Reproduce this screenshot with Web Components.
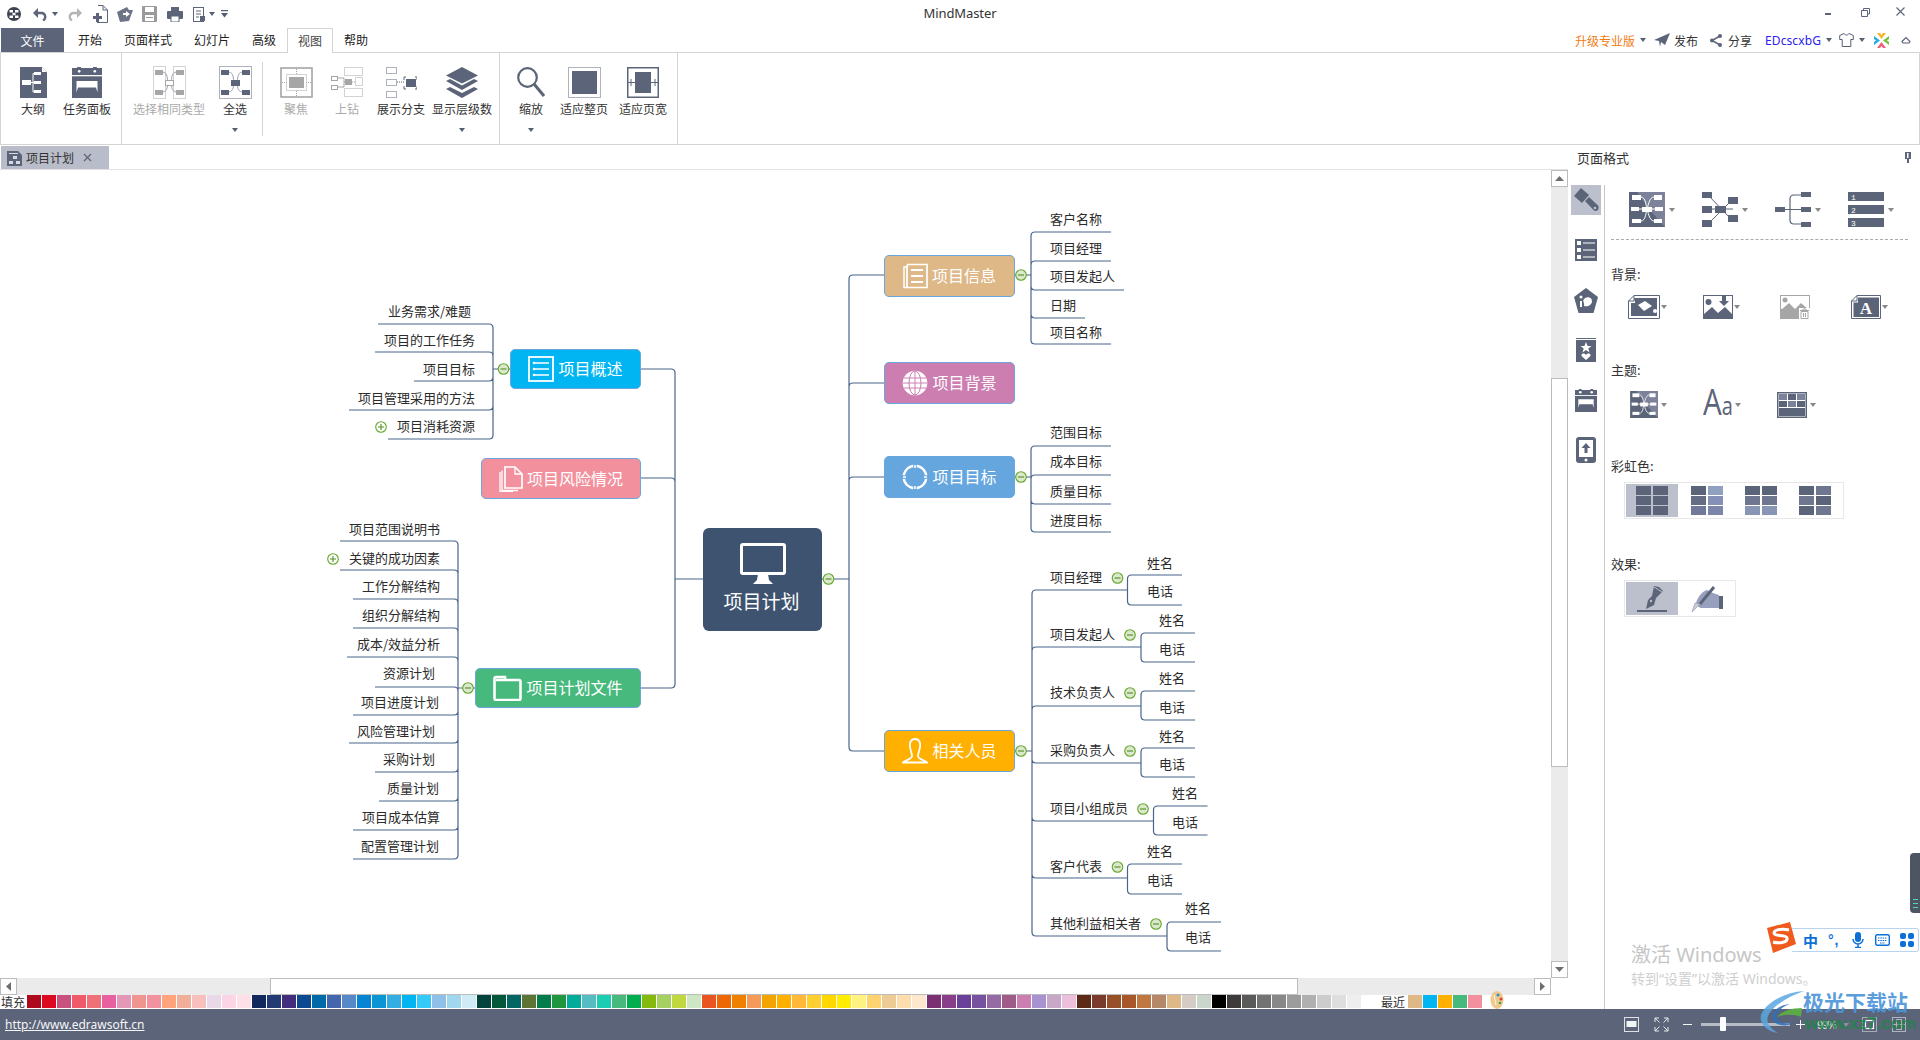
<!DOCTYPE html>
<html lang="zh">
<head>
<meta charset="utf-8">
<title>MindMaster</title>
<style>
  html, body { margin: 0; height: 100%; overflow: hidden; background: #fff; }
  body { font-family: "Noto Sans CJK SC", "Noto Sans", sans-serif; font-size: 12px; color: #333; }
</style>
</head>
<body>
<mm-app></mm-app>
<script>
const C = '#5b6478', G = '#a6a6a6';
const svg = (w, h, body, extra = '') => `<svg xmlns="http://www.w3.org/2000/svg" width="${w}" height="${h}" viewBox="0 0 ${w} ${h}" ${extra}>${body}</svg>`;

// map shape used by 选择相同类型 / 全选
const xmap = (col, frame) => svg(33, 33, `
  ${frame ? `<rect x=".5" y=".5" width="32" height="32" fill="none" stroke="${col}" stroke-dasharray="1 1"/>`
          : `<rect x=".5" y=".5" width="12" height="32" fill="none" stroke="${col}" stroke-dasharray="1 1"/><rect x="20.5" y=".5" width="12" height="32" fill="none" stroke="${col}" stroke-dasharray="1 1"/>`}
  <path d="M10 6C15 7 14 13 15 16M23 6C18 7 19 13 18 16M10 26C15 25 14 20 15 18M23 26C18 25 19 20 18 18" fill="none" stroke="#9a9fae"/>
  <rect x="2" y="4" width="8" height="5" fill="${col}"/><rect x="23" y="4" width="8" height="5" fill="${col}"/>
  <rect x="2" y="24" width="8" height="5" fill="${col}"/><rect x="23" y="24" width="8" height="5" fill="${col}"/>
  ${frame ? `<rect x="12" y="14" width="9" height="6" fill="${col}"/>` : `<rect x="12.5" y="14.5" width="8" height="5" fill="#fff" stroke="${col}"/>`}`);

const calendar = (w, h) => svg(w, h, `
  <path d="M0 1H${w * .17}V0H${w * .3}V1H${w * .7}V0H${w * .83}V1H${w}V${h * .26}H0Z" fill="${C}"/>
  <circle cx="${w * .24}" cy="${h * .14}" r="1.3" fill="#fff"/><circle cx="${w * .76}" cy="${h * .14}" r="1.3" fill="#fff"/>
  <path d="M0 ${h * .3}H${w}V${h}H0Z" fill="${C}"/>
  <path d="M${w * .15} ${h * .45}H${w * .85}V${h * .82}L${w * .8} ${h * .66}H${w * .2}L${w * .15} ${h * .82}Z" fill="#fff"/>`);

const mapStyle = (w, h) => svg(36, 35, `
  <rect width="36" height="35" fill="${C}"/><path d="M8 0H36V35L20 17Z" fill="#7b8299"/>
  <path d="M12 5C17 5 17 15 18 17M25 5C20 5 19 15 18 17M12 29C17 29 17 19 18 17M25 29C20 29 19 19 18 17M10 17H26" fill="none" stroke="#fff"/>
  <g fill="#fff"><rect x="3" y="3" width="9" height="5"/><rect x="25" y="3" width="8" height="5"/><rect x="2" y="15" width="8" height="4"/><rect x="26" y="15" width="8" height="4"/><rect x="3" y="27" width="9" height="4"/><rect x="25" y="27" width="8" height="4"/><rect x="13" y="15" width="10" height="5"/></g>`, `style="width:${w}px;height:${h}px"`);

const rainbow = (cols) => svg(32, 29, cols.map((c, i) => `<rect x="${i % 2 ? 17 : 0}" y="${Math.floor(i / 2) * 10}" width="15" height="9" fill="${c}"/>`).join(''));

const ICONS = {
  // quick access bar
  logo: svg(14, 14, `<circle cx="7" cy="7" r="7" fill="#3f4350"/><g fill="#fff"><rect x="2.5" y="3" width="3.5" height="2.5"/><rect x="8" y="3" width="3.5" height="2.5"/><rect x="2.5" y="8.5" width="3.5" height="2.5"/><rect x="8" y="8.5" width="3.5" height="2.5"/><rect x="5.5" y="5.8" width="3" height="2.4"/></g>`),
  undo: svg(15, 14, `<path d="M3 6H9A4 4 0 0 1 10 13.5" fill="none" stroke="${C}" stroke-width="2.4"/><path d="M5 1V11L0 6Z" fill="${C}"/>`),
  redo: svg(15, 14, `<path d="M12 6H6A4 4 0 0 0 5 13.5" fill="none" stroke="#b4b4b4" stroke-width="2.4"/><path d="M10 1V11L15 6Z" fill="#b4b4b4"/>`),
  newdoc: svg(16, 18, `<path d="M6 .5H11L15.5 5V17.5H5" fill="none" stroke="${C}"/><path d="M11 .5V5H15.5" fill="none" stroke="${C}"/><path d="M4 8V11H1V14H4V17H7V14H10V11H7V8Z" fill="${C}"/>`),
  open: svg(16, 15, `<path d="M0 5L10 0L12 3L16 3L12 14L3 15Z" fill="#6d7485"/><path d="M9 4L13 7L9 10V8H6V6H9Z" fill="#fff"/>`),
  save: svg(15, 16, `<rect width="15" height="16" rx="1" fill="#9a9a9a"/><rect x="3" y="1" width="9" height="5" fill="#fff"/><rect x="3" y="9" width="9" height="6" fill="#fff"/><rect x="4" y="11" width="7" height="1" fill="#9a9a9a"/>`),
  print: svg(16, 15, `<rect x="4" y="0" width="8" height="4" fill="${C}"/><rect y="4" width="16" height="8" rx="1" fill="${C}"/><rect x="4" y="9" width="8" height="6" fill="#fff" stroke="${C}"/>`),
  exportdoc: svg(12, 15, `<rect x=".5" y=".5" width="10" height="14" fill="#fff" stroke="${C}"/><path d="M3 4H8M3 7H8M3 10H6" stroke="${C}"/><path d="M7 9H12V14H7Z" fill="${C}"/>`),
  custom: svg(7, 8, `<rect y="0" width="7" height="1.200" fill="#555f74"/><path d="M0 3H7L3.500 7.500Z" fill="#555f74"/>`),
  // ribbon
  outline: svg(27, 31, `<path d="M0 0H22L27 5V31H0Z" fill="${C}"/><path d="M22 0L27 5H22Z" fill="#fff"/>
    <path d="M9 15.5H13M13 6.5V25M13 6.5H15M13 15.5H15M13 25H15" stroke="#fff" fill="none"/>
    <g fill="#fff"><rect x="2" y="13" width="9" height="5"/><rect x="14" y="5" width="7" height="3"/><rect x="14" y="14" width="7" height="3"/><rect x="14" y="23" width="7" height="3"/></g>`),
  taskpanel: calendar(30, 31),
  selsame: xmap(G, false),
  selall: xmap(C, true),
  focus: svg(33, 31, `<rect x="1" y="1" width="31" height="29" fill="none" stroke="${G}" stroke-width="1.6"/><path d="M16.5 2V29M2 15.5H31" stroke="${G}" stroke-dasharray="1 1"/><rect x="6.5" y="7.5" width="20" height="16" fill="#fff" stroke="${G}" stroke-dasharray="1 1"/><rect x="9" y="10" width="15" height="11" fill="${G}"/>`),
  drill: svg(32, 30, `<rect x=".5" y="9.5" width="6" height="4" fill="#fff" stroke="${G}"/><rect x=".5" y="18.5" width="6" height="4" fill="#fff" stroke="${G}"/><path d="M7 11H13M7 20H13M13 11V20M13 15H14" fill="none" stroke="${G}"/><rect x="14" y="12" width="7" height="6" fill="${G}"/><g fill="none" stroke="${G}" stroke-dasharray="1 1"><rect x="13.5" y=".5" width="18" height="8"/><rect x="24.5" y="10.5" width="7" height="8"/><rect x="13.5" y="21.5" width="18" height="8"/><path d="M21 15H24"/></g>`),
  branch: svg(31, 31, `<g fill="none" stroke="${C}" stroke-dasharray="1 1"><rect x=".5" y=".5" width="10" height="6"/><rect x=".5" y="12.5" width="10" height="6"/><rect x=".5" y="24.5" width="10" height="6"/><path d="M11 15H18"/></g><rect x="20" y="12" width="10" height="8" fill="${C}"/><path d="M18 13V10H20M29 10H31V13M18 19V22H20M29 22H31V19" fill="none" stroke="${C}"/>`),
  layers: svg(32, 31, `<path d="M16 0L32 8.5L16 16.5L0 8.5Z" fill="${C}"/><path d="M0 14L4 12L16 18.5L28 12L32 14L16 23Z" fill="${C}"/><path d="M0 22L4 20L16 26L28 20L32 22L16 31Z" fill="${C}"/>`),
  zoom: svg(28, 30, `<circle cx="10.5" cy="10.5" r="9.3" fill="none" stroke="${C}" stroke-width="2.2"/><path d="M17 17L27 29" stroke="${C}" stroke-width="3"/>`),
  fitpage: svg(33, 31, `<rect x=".5" y=".5" width="32" height="30" fill="none" stroke="${C}" stroke-dasharray="1 1"/><rect x="4" y="4" width="25" height="23" fill="${C}"/>`),
  fitwidth: svg(32, 31, `<rect x=".75" y=".75" width="30.5" height="29.5" fill="none" stroke="${C}" stroke-width="1.5"/><rect x="8" y="5" width="16" height="21" fill="${C}"/><path d="M1 15.5H31M4 12V19M28 12V19" stroke="${C}"/>`),
  // top right
  plane: svg(16, 14, `<path d="M0 7L16 0L11 12L7 9L6 14L5 8Z" fill="${C}"/>`),
  share: svg(12, 13, `<path d="M10 2L2 6.5L10 11" fill="none" stroke="${C}" stroke-width="1.5"/><circle cx="10" cy="2" r="2" fill="${C}"/><circle cx="2" cy="6.5" r="2" fill="${C}"/><circle cx="10" cy="11" r="2" fill="${C}"/>`),
  shirt: svg(15, 14, `<path d="M5 .5L0.7 2.5V6.5H3.2V13.5H11.8V6.5H14.3V2.5L10 .5C9 2.5 6 2.5 5 .5Z" fill="#fff" stroke="#555f74"/>`),
  brand: svg(15, 15, `<path d="M3 0H6L7.5 2L9 0H12L7.5 6Z" fill="#f4b62c"/><path d="M15 3V6L13 7.5L15 9V12L9 7.5Z" fill="#7ac143"/><path d="M3 15H6L7.5 13L9 15H12L7.5 9Z" fill="#ef5d7c"/><path d="M0 3V6L2 7.5L0 9V12L6 7.5Z" fill="#29abe2"/>`),
  upchev: svg(10, 8, `<path d="M1 5.5L5 1.5L9 5.5L8 7H2Z" fill="none" stroke="#555f74" stroke-width="1.1"/>`),
  pin: svg(8, 11, `<path d="M1 0H7V7H5V11H3V7H1Z" fill="${C}"/><rect x="3" y="1" width="1.5" height="5" fill="#fff"/>`),
  tabdoc: svg(15, 16, `<path d="M0 1H11L15 5V16H0Z" fill="${C}"/><g fill="#d6d9e0"><rect x="2" y="3" width="9" height="1"/><rect x="6" y="6" width="4" height="3"/><rect x="2" y="11" width="4" height="3"/><rect x="9" y="11" width="4" height="3"/></g>`),
  // panel side tabs
  sBrush: svg(26, 26, `<path d="M8 1L1 9L9 16L16 8Z" fill="${C}"/><path d="M12 14L16 10L25 18.5C27 21 24 26 20.5 23Z" fill="${C}"/><circle cx="22" cy="21" r="1.3" fill="#bcc0cc"/>`),
  sList: svg(22, 22, `<rect width="22" height="22" fill="${C}"/><g fill="#fff"><rect x="2" y="2" width="4" height="4"/><rect x="2" y="9" width="4" height="4"/><rect x="2" y="16" width="4" height="4"/><rect x="8" y="3.500" width="12" height="1"/><rect x="8" y="10.500" width="12" height="1"/><rect x="8" y="17.500" width="12" height="1"/></g>`),
  sPenta: svg(24, 25, `<path d="M12 0L24 9L19.500 25H4.500L0 9Z" fill="${C}"/><path d="M10 11C13 8 18 9 18 13C18 17 14 19 10 18C11 15 8 13 10 11Z" fill="#fff"/><circle cx="7" cy="9" r="1.500" fill="#fff"/><path d="M6 13H8V19H6Z" fill="#fff"/>`),
  sMark: svg(20, 24, `<rect width="20" height="1" fill="${C}"/><rect y="2" width="20" height="22" fill="${C}"/><path d="M10 4L11.600 8H15.500L12.300 10.500L13.500 14.500L10 12L6.500 14.500L7.700 10.500L4.500 8H8.400Z" fill="#fff"/><path d="M10 22L5.500 18C5 15 8.500 15 10 17C11.500 15 15 15 14.500 18Z" fill="#fff"/>`),
  sCal: calendar(22, 23),
  sPhone: svg(20, 26, `<rect width="20" height="26" rx="3" fill="${C}"/><rect x="3" y="3" width="14" height="17" fill="#fff"/><circle cx="10" cy="23" r="1.500" fill="#fff"/><path d="M10 6L14.500 11H11.500V16H8.500V11H5.500Z" fill="${C}"/>`),
  // panel row 1
  style1: mapStyle(36, 35),
  style2: svg(36, 35, `<path d="M6 3L30 28M6 32L30 8M5 17H31" stroke="${C}" fill="none"/><g fill="${C}"><rect width="10" height="6"/><rect y="14" width="10" height="7"/><rect y="28" width="10" height="7"/><rect x="13" y="14" width="11" height="7"/><rect x="26" y="5" width="10" height="7"/><rect x="26" y="23" width="10" height="7"/></g>`),
  style3: svg(36, 35, `<path d="M10 17.500H26M26 3H19Q15 3 15 7V28Q15 32 19 32H26" stroke="${C}" stroke-width="1.200" fill="none"/><g fill="${C}"><rect y="15" width="10" height="5"/><rect x="26" width="10" height="5"/><rect x="26" y="15" width="10" height="5"/><rect x="26" y="30" width="10" height="5"/></g>`),
  style4: svg(36, 35, `<g fill="${C}"><rect width="36" height="9"/><rect y="13" width="36" height="9"/><rect y="26" width="36" height="9"/></g><g fill="#fff" font-family="Liberation Mono, monospace" font-size="8"><text x="3" y="7.500">1</text><text x="3" y="20.500">2</text><text x="3" y="33.500">3</text></g>`),
  // 背景
  bgFill: svg(32, 24, `<path d="M6 .5H31.500V23.500H.5V6Z" fill="#fff" stroke="${C}"/><path d="M6 .5V6H.5" fill="none" stroke="${C}"/><rect x="3" y="8" width="26" height="13" fill="${C}"/><path d="M6 3H29V21H10Z" fill="${C}"/><path d="M10 10L17 6L24 11L16 16Z" fill="#fff"/><circle cx="27" cy="16" r="2" fill="#fff"/>`),
  bgImage: svg(30, 24, `<rect x=".5" y=".5" width="29" height="23" fill="#fff" stroke="${C}"/><path d="M0 24V20L9 12L15 18L22 12L30 20V24Z" fill="${C}"/><circle cx="5.500" cy="7" r="3" fill="${C}"/><path d="M19 0H23V6H26L21 11L16 6H19Z" fill="${C}"/>`),
  bgDel: svg(30, 24, `<rect width="30" height="24" fill="${G}"/><rect x="1" y="1" width="28" height="13" fill="#fff"/><path d="M1 15L9 8L15 14L21 8L29 15V16H1Z" fill="${G}"/><circle cx="5" cy="5" r="2.500" fill="${G}"/><rect x="19" y="13" width="11" height="11" fill="#fff"/><path d="M20 15.500H29M23 15.500V14H26V15.500M21 16.500H28V23.500H21ZM23.500 18V22M25.500 18V22" fill="none" stroke="${G}"/>`),
  bgText: svg(30, 24, `<path d="M6 .5H29.500V23.500H.5V6Z" fill="#fff" stroke="${C}"/><path d="M6 .5V6H.5" fill="none" stroke="${C}"/><path d="M7 2.500H28V22H2.500V7.500H7Z" fill="${C}"/><text x="15" y="19" text-anchor="middle" fill="#fff" font-family="Liberation Serif, serif" font-weight="700" font-size="17">A</text>`),
  // 主题
  themeMap: mapStyle(28, 27),
  themeTable: svg(30, 26, `<rect x=".75" y=".75" width="28.500" height="24.500" fill="#fff" stroke="${C}" stroke-width="1.500"/><g fill="#7b8299"><rect x="2" y="2" width="8" height="6"/><rect x="20" y="2" width="8" height="6"/><rect x="11" y="9" width="8" height="6"/></g><g fill="${C}"><rect x="11" y="2" width="8" height="6"/><rect x="2" y="9" width="8" height="6"/><rect x="20" y="9" width="8" height="6"/><rect x="2" y="16" width="26" height="8"/></g>`),
  // 彩虹色
  rb1: rainbow([C, C, C, C, C, C]),
  rb2: rainbow([C, '#90a0c0', '#656d85', '#8490b5', '#70799a', '#7b86aa']),
  rb3: rainbow([C, C, '#6e7690', '#6e7690', '#8995b5', '#8995b5']),
  rb4: rainbow([C, '#6e7690', '#6e7690', C, C, '#6e7690']),
  // 效果
  fxPen: svg(32, 28, `<rect x="1" y="25" width="30" height="2" fill="${C}"/><path d="M18 1L23 2L27 6L23 10L20 13L18 20L10 24L12 15L16 11Z" fill="${C}"/><path d="M18 2L26 7" stroke="#bcc0cc"/><circle cx="15" cy="16" r="1.200" fill="#bcc0cc"/>`),
  fxHand: svg(32, 28, `<path d="M5 18C7 11 12 6 16 5L22 8L28 10V23H10C8 23 6 20 5 18Z" fill="#97a0bc"/><rect x="28" y="11" width="4" height="13" fill="${C}"/><path d="M23 2L9 19" stroke="${C}" stroke-width="3"/><path d="M9 19L1 27L4 18Z" fill="#c8ccd6" stroke="#8e94a6" stroke-width=".6"/>`),
  // status bar
  stFit: svg(15, 15, `<rect x=".5" y=".5" width="14" height="14" fill="none" stroke="#dfe1e6"/><rect x="2.500" y="4" width="10" height="6" fill="#f2f3f5"/>`),
  stFull: svg(15, 15, `<path d="M1 5V1H5M10 1H14V5M1 10V14H5M10 14H14V10M1 1L5.500 5.500M14 1L9.500 5.500M1 14L5.500 9.500M14 14L9.500 9.500" fill="none" stroke="#e6e8ec"/>`),
  stPage: svg(15, 15, `<rect x=".5" y=".5" width="14" height="14" fill="none" stroke="#f0f1f3" stroke-dasharray="1 1"/><rect x="3.500" y="3.500" width="8" height="8" fill="none" stroke="#fff" stroke-width="1.200"/>`),
  stWidth: svg(14, 15, `<rect x=".5" y=".5" width="13" height="14" fill="none" stroke="#aeb3bf"/><rect x="4.500" y="2.500" width="5" height="10" fill="none" stroke="#aeb3bf"/><path d="M0 7.500H14" stroke="#aeb3bf"/>`),
  palette: svg(14, 18, `<ellipse cx="7" cy="9" rx="6.500" ry="9" fill="#eec98c"/><circle cx="8" cy="4" r="1.500" fill="#2f8ac6"/><circle cx="11" cy="8" r="1.500" fill="#d8413f"/><circle cx="10" cy="12" r="1.300" fill="#3f9f54"/><path d="M4 4L6 14" stroke="#fff8e6"/>`)
};

class MmIcon extends HTMLElement {
  connectedCallback() {
    if (this.shadowRoot) return;
    this.attachShadow({ mode: 'open' }).innerHTML = `<style>:host{display:inline-flex;flex:none;line-height:0}</style>${ICONS[this.getAttribute('name')] || ''}`;
  }
}

// small dropdown triangle
class MmCaret extends HTMLElement {
  constructor() {
    super();
    this.attachShadow({ mode: 'open' }).innerHTML = `<style>
      :host{display:inline-block;flex:none;width:0;height:0;border-left:3.5px solid transparent;border-right:3.5px solid transparent;border-top:4px solid var(--caret,#555f74)}
    </style>`;
  }
}

class MmTitlebar extends HTMLElement {
  constructor() {
    super();
    const items = [['logo', 7], ['undo', 12], [null, 4], ['redo', 9], ['newdoc', 10], ['open', 9], ['save', 9], ['print', 10], ['exportdoc', 10], [null, 4]];
    const quick = items.map(([n, m]) => n ? `<mm-icon name="${n}" style="margin-left:${m}px"></mm-icon>` : `<mm-caret style="margin-left:${m}px"></mm-caret>`).join('');
    this.attachShadow({ mode: 'open' }).innerHTML = `<style>
      :host{display:grid;grid-template-columns:1fr auto 1fr;height:28px;align-items:center;background:#fff}
      .quick,.win{display:flex;align-items:center}
      .title{font:13px "Noto Sans",sans-serif;color:#333;letter-spacing:-.1px;padding-bottom:2px}
      .win{justify-content:flex-end}
      .min{width:6px;height:2px;background:#5b6478;margin-right:30px}
      .res{margin-right:26px;margin-top:-4px}
      .close{margin-right:15px;margin-top:-5px}
    </style>
    <div class="quick">${quick}<mm-icon name="custom" style="margin-left:6px"></mm-icon></div>
    <div class="title">MindMaster</div>
    <div class="win">
      <div class="min"></div>
      <svg class="res" width="9" height="9" viewBox="0 0 9 9"><path d="M2.500 2V.5H8.500V6H7M.5 2.500H6.500V8.500H.5Z" fill="none" stroke="#5b6478"/></svg>
      <svg class="close" width="9" height="9" viewBox="0 0 9 9"><path d="M.5 .5L8.500 8.500M8.500 .5L.5 8.500" stroke="#5b6478" stroke-width="1.100"/></svg>
    </div>`;
  }
}

class MmTabs extends HTMLElement {
  constructor() {
    super();
    const tabs = ['开始', '页面样式', '幻灯片', '高级', '视图', '帮助'];
    this.attachShadow({ mode: 'open' }).innerHTML = `<style>
      :host{display:flex;height:24px;align-items:stretch;position:relative;z-index:1}
      .file{margin-left:1px;width:63px;background:#5b6478;color:#fff;display:flex;align-items:center;justify-content:center}
      .tabs{display:flex;margin-left:3px}
      .tab{padding:0 11px;line-height:24px;color:#222;box-sizing:border-box}
      .tab.on{height:25px;border:1px solid #d4d4d4;border-bottom:0;padding:0 10px;line-height:23px;background:#fff;color:#444}
      .right{margin-left:auto;display:flex;align-items:center;height:24px}
      .up{color:#f47a10}
      .user{color:#2a22f0;font:12px "Noto Sans",sans-serif;letter-spacing:.1px}
      span{white-space:nowrap}
    </style>
    <div class="file">文件</div>
    <div class="tabs">${tabs.map(t => `<div class="tab ${t === '视图' ? 'on' : ''}">${t}</div>`).join('')}</div>
    <div class="right">
      <span class="up">升级专业版</span><mm-caret style="margin-left:5px"></mm-caret>
      <mm-icon name="plane" style="margin-left:8px"></mm-icon><span style="margin-left:4px">发布</span>
      <mm-icon name="share" style="margin-left:12px"></mm-icon><span style="margin-left:6px">分享</span>
      <span class="user" style="margin-left:13px">EDcscxbG</span><mm-caret style="margin-left:5px"></mm-caret>
      <mm-icon name="shirt" style="margin-left:7px"></mm-icon><mm-caret style="margin-left:5px"></mm-caret>
      <mm-icon name="brand" style="margin-left:9px"></mm-icon>
      <mm-icon name="upchev" style="margin-left:12px;margin-right:9px"></mm-icon>
    </div>`;
  }
}

class RbButton extends HTMLElement {
  constructor() {
    super();
    const icon = this.getAttribute('icon');
    const caret = this.hasAttribute('caret') ? '<mm-caret class="c"></mm-caret>' : '';
    this.attachShadow({ mode: 'open' }).innerHTML = `<style>
      :host{display:flex;flex:none;flex-direction:column;align-items:center;box-sizing:border-box;padding-top:13px;color:#333;height:91px}
      :host([off]){color:#aaa}
      .i{height:32px;display:flex;align-items:center;justify-content:center}
      .t{margin-top:2px;line-height:18px;white-space:nowrap}
      .c{margin-top:10px}
    </style>
    <div class="i"><mm-icon name="${icon}"></mm-icon></div><div class="t"><slot></slot></div>${caret}`;
  }
}

class RbGroup extends HTMLElement {
  constructor() {
    super();
    this.attachShadow({ mode: 'open' }).innerHTML = `<style>
      :host{display:flex;flex:none;box-sizing:border-box;border-right:1px solid #d4d4d4;height:91px}
      :host([short]){border-right:0}
      :host([short])::after{content:"";align-self:center;width:1px;height:74px;background:#d4d4d4;margin-left:auto}
    </style><slot></slot>`;
  }
}

class MmRibbon extends HTMLElement {
  constructor() {
    super();
    this.attachShadow({ mode: 'open' }).innerHTML = `<style>
      :host{display:flex;height:93px;box-sizing:border-box;border:1px solid #d4d4d4;background:#fff}
    </style><slot></slot>`;
  }
}

class MmDocTabs extends HTMLElement {
  constructor() {
    super();
    this.attachShadow({ mode: 'open' }).innerHTML = `<style>
      :host{display:flex;height:25px;box-sizing:border-box;border-bottom:1px solid #e3e3e3;padding-top:1px;padding-left:1px}
      .tab{width:108px;background:#b9bdc9;display:flex;align-items:center;box-sizing:border-box;padding-left:6px;color:#333}
      .t{margin-left:4px}
      .x{margin-left:9px}
    </style>
    <div class="tab"><mm-icon name="tabdoc"></mm-icon><span class="t">项目计划</span>
      <svg class="x" width="9" height="9" viewBox="0 0 9 9"><path d="M1 1L8 8M8 1L1 8" stroke="#5b6478" stroke-width="1.200"/></svg></div>`;
  }
}

class MapTopic extends HTMLElement {
  constructor() {
    super();
    this.attachShadow({ mode: 'open' }).innerHTML = `<style>
      :host{position:absolute;display:flex;align-items:center;justify-content:center;gap:4px;box-sizing:border-box;border:1px solid #6aa5dc;border-radius:5px;color:#fff;font-size:16px;background:var(--bg)}
      span{white-space:nowrap;line-height:20px;padding-bottom:2px}
    </style><slot name="icon"></slot><span><slot></slot></span>`;
  }
}

class MapRoot extends HTMLElement {
  constructor() {
    super();
    this.attachShadow({ mode: 'open' }).innerHTML = `<style>
      :host{position:absolute;display:flex;flex-direction:column;align-items:center;box-sizing:border-box;border-radius:6px;background:#3e5370;color:#fff;font-size:19px;padding-top:15px}
      span{line-height:28px;margin-top:3px;margin-right:2px;white-space:nowrap}
    </style><slot name="icon"></slot><span><slot></slot></span>`;
  }
}

class MapLeaf extends HTMLElement {
  constructor() {
    super();
    this.attachShadow({ mode: 'open' }).innerHTML = `<style>
      :host{position:absolute;font-size:13px;line-height:16px;height:18px;color:#2b2b2b;white-space:nowrap}
    </style><slot></slot>`;
  }
}

const WHITE = 'fill="none" stroke="#fff"';
const TOPIC_ICONS = {
  info: svg(25, 26, `<path d="M4 1.500H24V24.500H4" ${WHITE} stroke-width="1.700"/><path d="M4 4H1V24.500H4" ${WHITE} stroke-width="1.500"/><path d="M4 2V24M8 7H20M8 13H20M8 19H20" ${WHITE} stroke-width="1.800"/>`),
  globe: svg(26, 26, `<circle cx="13" cy="13" r="12.300" fill="#fff"/><g stroke="#cc7eb1" fill="none"><ellipse cx="13" cy="13" rx="6" ry="12"/><path d="M13 1V25M2 8H24M1 13H25M2 18H24"/></g>`),
  target: svg(26, 26, `<circle cx="13" cy="13" r="11.300" ${WHITE} stroke-width="2.400"/><path d="M13 0V5M13 21V26M0 13H5M21 13H26" stroke="#66a6df" stroke-width="3.500"/><path d="M13 1V4M13 22V25M1 13H4M22 13H25" stroke="#fff" stroke-width="1.600"/>`),
  person: svg(26, 26, `<path d="M13 1C8.500 1 7.500 5 8 9C8.500 13 10 15 10 18C10 21 4 22 1 24.500H25C22 22 16 21 16 18C16 15 17.500 13 18 9C18.500 5 17.500 1 13 1Z" ${WHITE} stroke-width="1.800"/>`),
  list: svg(26, 26, `<rect x="1" y="1" width="24" height="24" ${WHITE} stroke-width="1.800"/><path d="M5 7H21M5 13H21M5 19H21" ${WHITE} stroke-width="1.600"/><circle cx="6" cy="7" r="1.300" fill="#fff"/><circle cx="6" cy="13" r="1.300" fill="#fff"/><circle cx="6" cy="19" r="1.300" fill="#fff"/>`),
  pages: svg(24, 26, `<path d="M6 1H16L23 8V22H6Z" ${WHITE} stroke-width="1.700"/><path d="M16 1V8H23" ${WHITE} stroke-width="1.300"/><path d="M3 4.500V24.500H19M1 6V25.500H14" ${WHITE} stroke-width="1.300"/>`),
  folder: svg(29, 26, `<path d="M3 5H12V2H3Q1.500 2 1.500 4V23Q1.500 25 3 25H26Q27.500 25 27.500 23V7Q27.500 5 26 5H12" ${WHITE} stroke-width="2.600"/>`),
  monitor: svg(46, 41, `<rect x="1.500" y="1.500" width="43" height="29" rx="1.500" ${WHITE} stroke-width="3"/><path d="M18 31H28L29 37L33 41H13L17 37Z" fill="#fff"/>`)
};

// collapse / expand button on a branch
const toggleBtn = (x, y, plus) => `
  <circle cx="${x}" cy="${y}" r="5.300" fill="${plus ? '#fff' : '#dbe8cd'}" stroke="#63a62a" stroke-width="1.100"/>
  <path d="M${x - 3} ${y}H${x + 3}${plus ? `M${x} ${y - 3}V${y + 3}` : ''}" stroke="#4f8f1d" stroke-width="1.100"/>`;

class MindMap extends HTMLElement {
  constructor() {
    super();
    const root = this.attachShadow({ mode: 'open' });
    const TOP = 170;
    let p = '', circles = '', html = '';
    const R = 4;
    // leaf branch: (trunk x, far end x, line y, curve direction, side)
    const br = (tx, ex, y, up, side) => {
      const s = side === 'r' ? 1 : -1;
      const cy = up ? y + R : y - R;
      p += `M${ex} ${y}H${tx + s * R}Q${tx} ${y} ${tx} ${cy}`;
    };
    const trunk = (x, a, b) => { p += `M${x} ${a + R}V${b - R}`; };
    const leafR = (t, x, y) => { html += `<map-leaf style="left:${x}px;top:${y - 9 - TOP}px">${t}</map-leaf>`; };
    const leafL = (t, xr, y) => { html += `<map-leaf style="right:${1551 - xr}px;top:${y - 9 - TOP}px">${t}</map-leaf>`; };
    const topic = (t, ic, x, y, w, h, bg) => {
      html += `<map-topic style="left:${x}px;top:${y - TOP}px;width:${w}px;height:${h}px;--bg:${bg}"><span slot="icon" style="display:flex">${TOPIC_ICONS[ic]}</span>${t}</map-topic>`;
    };

    // root and main trunks
    p += 'M675 579H703M822 579H849';
    trunk(849, 275, 751); br(849, 884, 275, true, 'r'); br(849, 884, 383, true, 'r'); br(849, 884, 477, true, 'r'); br(849, 884, 751, false, 'r');
    trunk(675, 369, 688); br(675, 641, 369, true, 'l'); br(675, 641, 478, true, 'l'); br(675, 641, 688, false, 'l');
    circles += toggleBtn(828.500, 579);

    html += `<map-root style="left:703px;top:${528 - TOP}px;width:119px;height:103px"><span slot="icon" style="display:flex">${TOPIC_ICONS.monitor}</span>项目计划</map-root>`;
    topic('项目信息', 'info', 884, 255, 131, 42, '#deb887');
    topic('项目背景', 'globe', 884, 362, 131, 42, '#cc7eb1');
    topic('项目目标', 'target', 884, 456, 131, 42, '#66a6df');
    topic('相关人员', 'person', 884, 730, 131, 42, '#ffb000');
    topic('项目概述', 'list', 510, 349, 131, 40, '#00b5f1');
    topic('项目风险情况', 'pages', 481, 458, 160, 41, '#f2919d');
    topic('项目计划文件', 'folder', 475, 668, 166, 40, '#47b97c');

    // 项目信息
    p += 'M1015 275H1031';
    trunk(1031, 232, 344); circles += toggleBtn(1021, 275);
    [['客户名称', 220, 232, 1111, true], ['项目经理', 249, 261, 1111, true], ['项目发起人', 277, 290, 1124, false], ['日期', 306, 318, 1085, false], ['项目名称', 333, 344, 1111, false]]
      .forEach(([t, ty, y, ex, up]) => { leafR(t, 1050, ty); br(1031, ex, y, up, 'r'); });

    // 项目目标
    p += 'M1015 477H1031';
    trunk(1031, 446, 532); circles += toggleBtn(1021, 477);
    [['范围目标', 433, 446, true], ['成本目标', 462, 475, true], ['质量目标', 492, 504, false], ['进度目标', 521, 532, false]]
      .forEach(([t, ty, y, up]) => { leafR(t, 1050, ty); br(1031, 1111, y, up, 'r'); });

    // 相关人员
    p += 'M1015 751H1032';
    trunk(1032, 590, 936); circles += toggleBtn(1021, 751);
    [['项目经理', 578, 590, true, 1127.500, 1117.500, 1147, 575, 605, 564, 592, 1182],
     ['项目发起人', 635, 647, true, 1141, 1130, 1159, 633, 662, 621, 650, 1195],
     ['技术负责人', 693, 706, true, 1141, 1130, 1159, 691, 720, 679, 708, 1195],
     ['采购负责人', 751, 763, false, 1141, 1130, 1159, 748, 777, 737, 765, 1195],
     ['项目小组成员', 809, 821, false, 1153.500, 1143, 1172, 806, 835, 794, 823, 1207.500],
     ['客户代表', 867, 878, false, 1127.500, 1117.500, 1147, 864, 894, 852, 881, 1182],
     ['其他利益相关者', 924, 936, false, 1167, 1156, 1185, 922, 951, 909, 938, 1221]]
      .forEach(([t, ty, y, up, sx, cx, nx, a, b, ny1, ny2, ex]) => {
        leafR(t, 1050, ty);
        br(1032, sx, y, up, 'r');
        circles += toggleBtn(cx, ty);
        trunk(sx, a, b); br(sx, ex, a, true, 'r'); br(sx, ex, b, false, 'r');
        leafR('姓名', nx, ny1); leafR('电话', nx, ny2);
      });

    // 项目概述
    p += 'M493 369H510';
    trunk(493, 324, 439); circles += toggleBtn(503.500, 369) + toggleBtn(381, 427, true);
    [['业务需求/难题', 471, 312, 324, 378, true], ['项目的工作任务', 475, 341, 352, 375, true], ['项目目标', 475, 370, 381, 414, false], ['项目管理采用的方法', 475, 399, 410, 349, false], ['项目消耗资源', 475, 427, 439, 388, false]]
      .forEach(([t, xr, ty, y, ex, up]) => { leafL(t, xr, ty); br(493, ex, y, up, 'l'); });

    // 项目计划文件
    p += 'M458 688H475';
    trunk(458, 541, 859); circles += toggleBtn(468, 688) + toggleBtn(333, 559, true);
    [['项目范围说明书', 440, 530, 541, 340, true], ['关键的成功因素', 440, 559, 570, 340, true], ['工作分解结构', 440, 587, 599, 353, true], ['组织分解结构', 440, 616, 628, 353, true], ['成本/效益分析', 440, 645, 657, 347, true], ['资源计划', 435, 674, 687, 375, true],
     ['项目进度计划', 439, 703, 715, 353, false], ['风险管理计划', 435, 732, 743, 349, false], ['采购计划', 435, 760, 772, 375, false], ['质量计划', 439, 789, 801, 379, false], ['项目成本估算', 440, 818, 830, 353, false], ['配置管理计划', 439, 847, 859, 353, false]]
      .forEach(([t, xr, ty, y, ex, up]) => { leafL(t, xr, ty); br(458, ex, y, up, 'l'); });

    root.innerHTML = `<style>
      :host{display:block;position:relative;flex:1;background:#fff;overflow:hidden}
      svg.lines{position:absolute;left:0;top:0}
    </style>
    <svg class="lines" width="1551" height="808" viewBox="0 ${TOP} 1551 808"><path d="${p}" fill="none" stroke="#48648a" stroke-width="1.200"/>${circles}</svg>
    ${html}`;
  }
}

class MmScrollbar extends HTMLElement {
  constructor() {
    super();
    const v = this.getAttribute('dir') === 'v';
    const before = this.getAttribute('before'), size = this.getAttribute('size');
    const arrow = (d) => `<div class="a"><svg width="9" height="9" viewBox="0 0 9 9"><path d="${d}" fill="#6e6e6e"/></svg></div>`;
    this.attachShadow({ mode: 'open' }).innerHTML = `<style>
      :host{display:flex;flex:none;flex-direction:${v ? 'column' : 'row'};${v ? 'width:17px' : 'height:17px'};background:#ebebeb}
      .a{flex:none;${v ? 'height:17px' : 'width:17px'};box-sizing:border-box;border:1px solid #bcbcbc;background:#fff;display:flex;align-items:center;justify-content:center}
      .gap{flex:none;${v ? 'height' : 'width'}:${before}px}
      .th{flex:none;${v ? 'height' : 'width'}:${size}px;box-sizing:border-box;border:1px solid #bcbcbc;background:#fff}
      .rest{flex:1}
    </style>
    ${arrow(v ? 'M0 7L4.500 2L9 7Z' : 'M7 0L2 4.500L7 9Z')}
    <div class="gap"></div><div class="th"></div><div class="rest"></div>
    ${arrow(v ? 'M0 2L4.500 7L9 2Z' : 'M2 0L7 4.500L2 9Z')}`;
  }
}

class MmPalette extends HTMLElement {
  constructor() {
    super();
    const cols = ('#af0a1c #dc0a20 #c9517e #ef5a6a #f07078 #e860a0 #e498b8 #f09490 #f292a0 #ffa47c #f1ae98 #f7c0bc #e8d8e8 #fbd5e5 #fde0e8 ' +
      '#11295c #243a75 #432e7d #0b4a91 #0069a8 #4466ae #5789c9 #0585d4 #0a96d4 #32aee2 #00b5f1 #33c9f9 #8fc0e8 #a0d6ee #cfebf6 ' +
      '#03433b #03583a #036662 #5e7434 #037c4c #20963e #03ab9b #56bcc1 #1ccdb1 #47b97c #00ae50 #85b90e #a6d060 #c0d83d #cfe6c5 ' +
      '#e85520 #ed6704 #f08000 #f59a58 #f2a500 #ffb000 #ffb838 #ffcf30 #ffd800 #ffee00 #fff280 #ffd470 #edcb94 #ffdcac #fee7cf ' +
      '#7b3073 #883e88 #6a409a #77539f #966aa2 #a05c88 #cc7eb1 #a892d0 #c8a8c8 #ecc0dc ' +
      '#5e2a18 #7a3a2c #985028 #a85828 #c07840 #b48868 #deb887 #d5cdc5 #cad5cb ' +
      '#000000 #3f3a3a #5a5a5a #727272 #888888 #9c9c9c #b0b0b0 #cccccc #dedede #eeeeee').split(' ');
    const recent = ['#deb887', '#00b5f1', '#ffb000', '#47b97c', '#f2919d'];
    const sw = (c) => `<i style="background:${c}"></i>`;
    this.attachShadow({ mode: 'open' }).innerHTML = `<style>
      :host{display:flex;flex:none;height:14px;align-items:flex-start;background:#fff;line-height:14px}
      .l{width:27px;padding-left:1px;box-sizing:border-box;flex:none;white-space:nowrap}
      i{display:block;flex:none;width:14px;height:13px;margin-right:1px}
      .row{display:flex}
      .r{margin-left:19px;width:27px;flex:none;white-space:nowrap}
      mm-icon{margin-left:7px;margin-top:-4px}
    </style>
    <div class="l">填充</div><div class="row">${cols.map(sw).join('')}</div>
    <div class="r">最近</div><div class="row">${recent.map(sw).join('')}</div>
    <mm-icon name="palette"></mm-icon>`;
  }
}

class PanelLabel extends HTMLElement {
  constructor() {
    super();
    this.attachShadow({ mode: 'open' }).innerHTML = `<style>
      :host{display:block;font-size:13px;line-height:16px;height:18px;color:#333;margin-left:6px}
    </style><slot></slot>`;
  }
}

class PanelRow extends HTMLElement {
  constructor() {
    super();
    this.attachShadow({ mode: 'open' }).innerHTML = `<style>
      :host{display:grid;grid-auto-flow:column;grid-template-columns:var(--cols);align-items:center;padding-left:var(--pl,24px);--caret:#888}
      ::slotted(div){display:flex;align-items:center;gap:var(--gap,4px)}
    </style><slot></slot>`;
  }
}

class PanelPicker extends HTMLElement {
  constructor() {
    super();
    this.attachShadow({ mode: 'open' }).innerHTML = `<style>
      :host{display:inline-flex;margin-left:19px;box-sizing:border-box;height:37px;border:1px solid #e8e8e8;padding:1px}
      ::slotted(div){width:54px;height:33px;display:flex;align-items:center;justify-content:center}
      ::slotted(div.on){background:#bcc0cc;width:52px;margin-right:2px}
    </style><slot></slot>`;
  }
}

class MmPanel extends HTMLElement {
  constructor() {
    super();
    const side = ['sBrush', 'sList', 'sPenta', 'sMark', 'sCal', 'sPhone'];
    this.attachShadow({ mode: 'open' }).innerHTML = `<style>
      :host{display:flex;flex-direction:column;flex:1;background:#fff;min-width:0;box-sizing:border-box}
      .head{height:25px;display:flex;align-items:center;padding:0 8px 0 9px;font-size:13px;color:#333;line-height:25px;flex:none}
      .pin{margin-left:auto}
      .body{flex:1;display:flex}
      .side{width:36px;flex:none;padding-top:15px;display:flex;flex-direction:column;gap:20px;align-items:center}
      .side div{width:30px;height:30px;display:flex;align-items:center;justify-content:center}
      .side div.on{background:#bcc0cc}
      .wrap{flex:1;min-width:0;display:flex;flex-direction:column}
      .rule{margin-top:15px;flex:1;border-left:1px solid #c8c8c8;display:flow-root}
      .cont{margin-top:-15px;display:flow-root}
    </style>
    <div class="head"><span>页面格式</span><mm-icon class="pin" name="pin"></mm-icon></div>
    <div class="body">
      <div class="side">${side.map((n, i) => `<div class="${i ? '' : 'on'}"><mm-icon name="${n}"></mm-icon></div>`).join('')}</div>
      <div class="wrap"><div class="rule"><div class="cont"><slot></slot></div></div></div>
    </div>`;
  }
}

class MmStatusbar extends HTMLElement {
  constructor() {
    super();
    this.attachShadow({ mode: 'open' }).innerHTML = `<style>
      :host{display:flex;flex:none;height:31px;background:#5b6478;align-items:center;color:#f0f1f3}
      a{margin-left:5px;color:#f4f5f7;font:12px "Noto Sans",sans-serif;text-decoration:underline}
      .r{margin-left:auto;display:flex;align-items:center}
      .sl{position:relative;width:89px;height:3px;background:#b8bcc6;margin:0 6px 0 9px}
      .minus,.plus{display:block;width:9px;height:1.500px;background:#f4f5f7;position:relative}
      .plus::after{content:"";position:absolute;left:3.700px;top:-3.700px;width:1.500px;height:9px;background:#f4f5f7}
      .h{position:absolute;left:19px;top:-6px;width:6px;height:14px;background:#fff;border-radius:1px}
      .z{font:11px "Liberation Sans",sans-serif;letter-spacing:-1px;margin-left:12px;width:19px;white-space:nowrap}
    </style>
    <a>http://www.edrawsoft.cn</a>
    <div class="r">
      <mm-icon name="stFit"></mm-icon><mm-icon name="stFull" style="margin-left:15px"></mm-icon>
      <i class="minus" style="margin-left:14px"></i>
      <div class="sl"><div class="h"></div></div>
      <i class="plus"></i>
      <span class="z">99%</span><mm-caret style="--caret:#8a90a0;margin-left:7px"></mm-caret>
      <mm-icon name="stPage" style="margin-left:13px"></mm-icon>
      <mm-icon name="stWidth" style="margin-left:15px;margin-right:14px"></mm-icon>
    </div>`;
  }
}

// things that sit over the finished window: activation note, IME bar, download-site mark
class MmOverlay extends HTMLElement {
  constructor() {
    super();
    this.attachShadow({ mode: 'open' }).innerHTML = `<style>
      :host{position:absolute;inset:0;pointer-events:none;z-index:5}
      div,svg{position:absolute}
      .a1,.a2{font-family:"Noto Sans","Noto Sans CJK SC",sans-serif;white-space:nowrap}
      .a1{left:1631px;top:941px;font-size:20px;line-height:28px;color:#c6c6c6}
      .a2{left:1631px;top:969px;font-size:14px;line-height:20px;color:#cfcfcf}
      .ime{left:1792px;top:928px;width:127px;height:24px;box-sizing:border-box;border:1px solid #b9d4ee;border-left:0;background:#fff;border-radius:0 3px 3px 0;display:flex;align-items:center;color:#0b6fd6;padding-left:11px;font:700 15px "Noto Sans CJK SC",sans-serif}
      .ime svg{position:static}
      .site{left:1803px;top:988px;font:700 21px/26px "Noto Sans CJK SC",sans-serif;color:#4b94d8;white-space:nowrap;opacity:.9}
      .xz{left:1805px;top:1012px;font:700 17px/24px "Liberation Sans",sans-serif;color:#178a44;white-space:nowrap;opacity:.75}
      .grip{left:1910px;top:853px;width:10px;height:60px;background:#4d5563;border-radius:4px 0 0 4px}
      .grip i{display:block;width:5px;height:1px;background:#52d1c0;margin:3px 0 0 3px}
    </style>
    <div class="grip"><i style="margin-top:46px"></i><i></i><i></i></div>
    <div class="a1">激活 Windows</div>
    <div class="a2">转到“设置”以激活 Windows。</div>
    <div class="ime">中
      <span style="margin-left:10px;font:700 14px 'Liberation Sans',sans-serif;letter-spacing:1px">°,</span>
      <svg width="12" height="16" viewBox="0 0 12 16" style="margin-left:12px"><rect x="3" y="0" width="6" height="10" rx="3" fill="#0b6fd6"/><path d="M1 7A5 5 0 0 0 11 7M6 12V15M3 15.500H9" fill="none" stroke="#0b6fd6" stroke-width="1.500"/></svg>
      <svg width="15" height="12" viewBox="0 0 15 12" style="margin-left:11px"><rect x=".7" y=".7" width="13.600" height="10.600" rx="1.500" fill="none" stroke="#0b6fd6" stroke-width="1.400"/><path d="M3 4H12M3 6.500H12M5 9H10" stroke="#0b6fd6" stroke-width="1.200" stroke-dasharray="1.500 .8"/></svg>
      <svg width="14" height="14" viewBox="0 0 14 14" style="margin-left:10px"><g fill="#0b6fd6"><rect width="6" height="6" rx="2"/><rect x="8" width="6" height="6" rx="2"/><rect y="8" width="6" height="6" rx="2"/><rect x="8" y="8" width="6" height="6" rx="2"/></g></svg>
    </div>
    <svg style="left:1766px;top:922px" width="30" height="31" viewBox="0 0 30 31"><path d="M1 6L24 0L30 22L7 31Z" fill="#f05a1c"/><path d="M23 8C15 6 8 8 8 11C8 15 20 12 21 16C22 20 14 22 7 20" fill="none" stroke="#fff" stroke-width="3"/></svg>
    <svg style="left:1760px;top:990px" width="46" height="44" viewBox="0 0 46 44">
      <path d="M44 1C26 2 6 12 1 25C-1 33 6 41 18 43C9 38 5 31 9 24C15 14 30 6 44 1Z" fill="#59a7e0" opacity=".85"/>
      <path d="M30 14C18 15 10 23 13 30C16 36 26 37 34 33C26 34 19 33 17 28C15 23 21 17 30 14Z" fill="#2f6fb8" opacity=".85"/>
      <path d="M42 18C30 18 21 22 17 27C25 24 34 24 41 27Z" fill="#5cb043" opacity=".9"/>
    </svg>
    <div class="site">极光下载站</div>
    <div class="xz">www.xz7.com</div>`;
  }
}

class MmApp extends HTMLElement {
  constructor() {
    super();
    const label = (t, m) => `<panel-label style="margin-top:${m}px">${t}</panel-label>`;
    this.attachShadow({ mode: 'open' }).innerHTML = `<style>
      :host{display:flex;flex-direction:column;position:relative;width:1920px;height:1040px;overflow:hidden;background:#fff}
      .body{flex:1;display:flex;min-height:0}
      .left{width:1568px;flex:none;display:flex;flex-direction:column}
      .main{flex:1;display:flex;min-height:0}
      .hs{display:flex;flex:none;background:#fff}
      .hs mm-scrollbar{width:1551px}
      .corner{width:17px}
      .aa{font:37px/27px "Open Sans",sans-serif;color:#5b6478;display:inline-block;width:30px;white-space:nowrap;transform-origin:0 50%;transform:scaleX(.8);margin-top:-3px}
      .aa small{font-size:25px}
    </style>
    <mm-titlebar></mm-titlebar>
    <mm-tabs></mm-tabs>
    <mm-ribbon>
      <rb-group style="width:121px;padding-left:6px">
        <rb-button icon="outline" style="width:52px">大纲</rb-button>
        <rb-button icon="taskpanel" style="width:56px">任务面板</rb-button>
      </rb-group>
      <rb-group short style="width:141px;padding-left:5px">
        <rb-button icon="selsame" off style="width:84px">选择相同类型</rb-button>
        <rb-button icon="selall" caret style="width:48px">全选</rb-button>
      </rb-group>
      <rb-group style="width:237px;padding-left:10px">
        <rb-button icon="focus" off style="width:46px">聚焦</rb-button>
        <rb-button icon="drill" off style="width:56px">上钻</rb-button>
        <rb-button icon="branch" style="width:52px">展示分支</rb-button>
        <rb-button icon="layers" caret style="width:70px">显示层级数</rb-button>
      </rb-group>
      <rb-group style="width:178px;padding-left:6px">
        <rb-button icon="zoom" caret style="width:50px">缩放</rb-button>
        <rb-button icon="fitpage" style="width:56px">适应整页</rb-button>
        <rb-button icon="fitwidth" style="width:62px">适应页宽</rb-button>
      </rb-group>
    </mm-ribbon>
    <div class="body">
      <div class="left">
        <mm-doc-tabs></mm-doc-tabs>
        <div class="main">
          <mind-map></mind-map>
          <mm-scrollbar dir="v" before="191" size="389"></mm-scrollbar>
        </div>
        <div class="hs"><mm-scrollbar dir="h" before="253" size="1028"></mm-scrollbar><div class="corner"></div></div>
        <mm-palette></mm-palette>
      </div>
      <mm-panel>
        <panel-row style="--cols:73px 73px 73px 73px;margin-top:22px;height:35px">
          <div><mm-icon name="style1"></mm-icon><mm-caret></mm-caret></div>
          <div><mm-icon name="style2"></mm-icon><mm-caret></mm-caret></div>
          <div><mm-icon name="style3"></mm-icon><mm-caret></mm-caret></div>
          <div><mm-icon name="style4"></mm-icon><mm-caret></mm-caret></div>
        </panel-row>
        <div style="margin:12px 12px 0 6px;border-top:1px dashed #aaa"></div>
        ${label('背景:', 26)}
        <panel-row style="--cols:75px 77px 71px 50px;--pl:23px;--gap:1px;margin-top:11px;height:24px">
          <div><mm-icon name="bgFill"></mm-icon><mm-caret></mm-caret></div>
          <div><mm-icon name="bgImage"></mm-icon><mm-caret></mm-caret></div>
          <div><mm-icon name="bgDel"></mm-icon></div>
          <div><mm-icon name="bgText"></mm-icon><mm-caret></mm-caret></div>
        </panel-row>
        ${label('主题:', 43)}
        <panel-row style="--cols:73px 74px 50px;--pl:25px;--gap:3px;margin-top:10px;height:27px">
          <div><mm-icon name="themeMap"></mm-icon><mm-caret></mm-caret></div>
          <div style="gap:1px"><span class="aa">A<small>a</small></span><mm-caret style="margin-left:1px"></mm-caret></div>
          <div><mm-icon name="themeTable"></mm-icon><mm-caret></mm-caret></div>
        </panel-row>
        ${label('彩虹色:', 41)}
        <panel-picker style="margin-top:6px">
          <div class="on"><mm-icon name="rb1"></mm-icon></div>
          <div><mm-icon name="rb2"></mm-icon></div>
          <div><mm-icon name="rb3"></mm-icon></div>
          <div><mm-icon name="rb4"></mm-icon></div>
        </panel-picker>
        ${label('效果:', 37)}
        <panel-picker style="margin-top:6px">
          <div class="on"><mm-icon name="fxPen"></mm-icon></div>
          <div><mm-icon name="fxHand"></mm-icon></div>
        </panel-picker>
      </mm-panel>
    </div>
    <mm-statusbar></mm-statusbar>
    <mm-overlay></mm-overlay>`;
  }
}

customElements.define('mm-icon', MmIcon);
customElements.define('mm-caret', MmCaret);
customElements.define('mm-titlebar', MmTitlebar);
customElements.define('mm-tabs', MmTabs);
customElements.define('rb-button', RbButton);
customElements.define('rb-group', RbGroup);
customElements.define('mm-ribbon', MmRibbon);
customElements.define('mm-doc-tabs', MmDocTabs);
customElements.define('map-topic', MapTopic);
customElements.define('map-root', MapRoot);
customElements.define('map-leaf', MapLeaf);
customElements.define('mind-map', MindMap);
customElements.define('mm-scrollbar', MmScrollbar);
customElements.define('mm-palette', MmPalette);
customElements.define('panel-label', PanelLabel);
customElements.define('panel-row', PanelRow);
customElements.define('panel-picker', PanelPicker);
customElements.define('mm-panel', MmPanel);
customElements.define('mm-statusbar', MmStatusbar);
customElements.define('mm-overlay', MmOverlay);
customElements.define('mm-app', MmApp);
</script>
</body>
</html>
